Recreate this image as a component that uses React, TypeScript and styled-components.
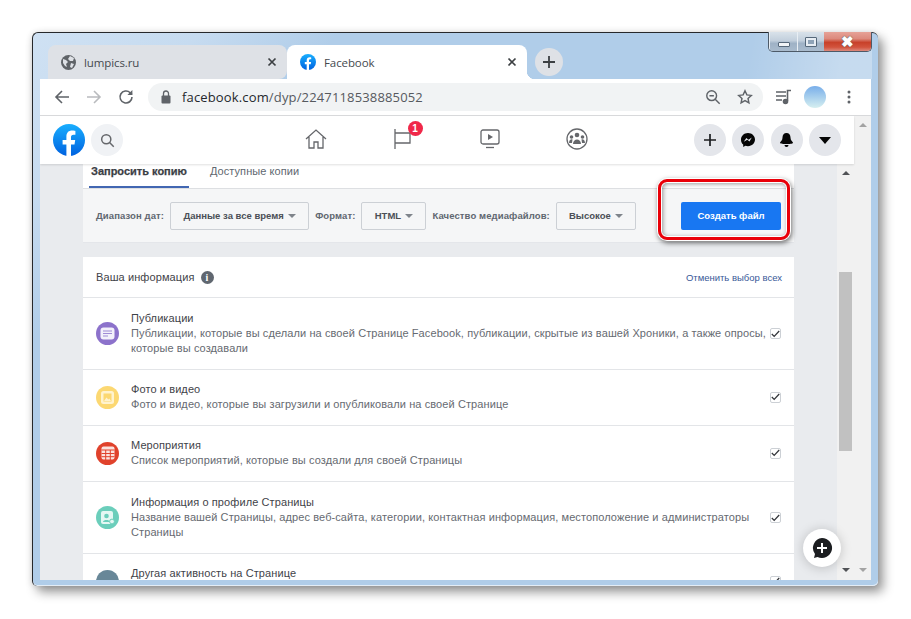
import React, { FC, ReactNode } from "react";
import styled, { createGlobalStyle } from "styled-components";

const GlobalStyle = createGlobalStyle`
  html, body {
    margin: 0;
    padding: 0;
    background: #ffffff;
  }
  * {
    box-sizing: border-box;
  }
`;

const Screen = styled.div`
  width: 911px;
  height: 619px;
  padding: 32px 0 0 32px;
  overflow: hidden;
  background: #ffffff;
`;

const Window = styled.div`
  width: 846px;
  height: 554px;
  display: flex;
  flex-direction: column;
  padding: 0 7px 6px 7px;
  border-top: 1px solid #26282b;
  border-left: 1px solid #26282b;
  border-radius: 6px 6px 5px 5px;
  background: linear-gradient(135deg, #cfe1f3 0, #c6dbf0 12%, #b0cde9 22%, #b0cde9 100%);
  box-shadow: inset 0 -1px 0 #e3ecf5, 5px 6px 11px rgba(0, 0, 0, 0.42), -1px 0 6px rgba(0, 0, 0, 0.1);
`;

const TabStrip = styled.div`
  height: 46px;
  display: flex;
  align-items: flex-end;
  margin: 0 -1px 0 -7px;
  padding-left: 15px;
  background: linear-gradient(100deg, transparent 85%, rgba(255, 255, 255, 0.28) 96%);
`;

const Tab = styled.div<{ $active?: boolean }>`
  position: relative;
  width: ${(p) => (p.$active ? 240 : 239)}px;
  height: 34px;
  display: flex;
  align-items: center;
  gap: 8px;
  padding: 0 10px 0 13px;
  border-radius: ${(p) => (p.$active ? "8px 8px 0 0" : "8px 8px 8px 0")};
  background: ${(p) => (p.$active ? "#ffffff" : "#dee1e6")};
  color: #45494e;
  font: 11.5px "Open Sans", "Noto Sans", sans-serif;
  letter-spacing: -0.1px;
`;

const TabTitle = styled.span`
  flex: 1;
`;

const Flare = styled.span`
  position: absolute;
  right: -8px;
  bottom: 0;
  width: 8px;
  height: 8px;
  background: radial-gradient(circle at 100% 0, transparent 8px, #ffffff 8.5px);
`;

const NewTab = styled.div`
  width: 28px;
  height: 28px;
  margin: 0 0 3px 8px;
  display: flex;
  align-items: center;
  justify-content: center;
  border-radius: 50%;
  background: #dee1e6;
`;

const WindowControls = styled.div`
  align-self: flex-start;
  margin: -1px 0 0 auto;
  height: 20px;
  display: flex;
  border: 1px solid #4d5a68;
  border-top: none;
  border-radius: 0 0 5px 5px;
  overflow: hidden;
`;

const ControlButton = styled.div<{ $width: number; $close?: boolean }>`
  width: ${(p) => p.$width}px;
  display: flex;
  align-items: center;
  justify-content: center;
  border-left: ${(p) => (p.$close ? "none" : "1px solid #e8eef4")};
  background: ${(p) =>
    p.$close
      ? "linear-gradient(#e6a297 0, #dc8a7d 35%, #c8412a 55%, #d2533d 80%, #dc8a7d 100%)"
      : "linear-gradient(#d9e2ea 0, #c2cfdc 45%, #9fb2c6 60%, #a9bbcd 100%)"};
`;

const MinGlyph = styled.span`
  width: 12px;
  height: 5px;
  margin-top: 5px;
  background: #f1f4f7;
  border: 1px solid #56687a;
  border-radius: 1px;
`;

const MaxGlyph = styled.span`
  width: 12px;
  height: 10px;
  border: 1px solid #56687a;
  border-radius: 1px;
  box-shadow: inset 0 0 0 2px #e7edf3;
  background: #8fa3b7;
`;

const CloseGlyph = styled.span`
  color: #ffffff;
  font: bold 15px "Liberation Sans", sans-serif;
  line-height: 15px;
  text-shadow: 0 0 1px #5a5a5a, 0 0 1px #5a5a5a;
`;

const Toolbar = styled.div`
  height: 37px;
  display: flex;
  align-items: center;
  padding: 0 6px;
  background: #ffffff;
  border-bottom: 1px solid #d8d9db;
`;

const Slot = styled.div<{ $width?: number }>`
  width: ${(p) => p.$width ?? 32}px;
  height: 28px;
  flex: none;
  display: flex;
  align-items: center;
  justify-content: center;
`;

const Omnibox = styled.div`
  flex: 1;
  height: 28px;
  margin: 0 5px 0 6px;
  display: flex;
  align-items: center;
  padding: 0 2px 0 10px;
  border-radius: 14px;
  background: #f1f3f4;
`;

const Url = styled.span`
  flex: 1;
  margin-left: 8px;
  color: #56595e;
  font: 13px "Open Sans", "Noto Sans", sans-serif;
  letter-spacing: 0.15px;
`;

const Host = styled.span`
  color: #25282c;
`;

const Avatar = styled.div`
  width: 22px;
  height: 22px;
  margin: 0 7px 0 4px;
  flex: none;
  border-radius: 50%;
  background: linear-gradient(#78aeea, #d6eff0);
`;

const Viewport = styled.div`
  position: relative;
  flex: 1;
  min-height: 0;
  display: flex;
  overflow: hidden;
`;

const Main = styled.div`
  width: 814px;
  display: flex;
  flex-direction: column;
`;

const FbBar = styled.div`
  position: relative;
  z-index: 2;
  height: 48px;
  flex: none;
  display: flex;
  align-items: center;
  padding: 0 13px;
  background: #ffffff;
  box-shadow: 0 1px 2px rgba(0, 0, 0, 0.12);
`;

const SearchCircle = styled.div`
  width: 32px;
  height: 32px;
  margin-left: 6px;
  display: flex;
  align-items: center;
  justify-content: center;
  border-radius: 50%;
  background: #f0f2f5;
`;

const NavGroup = styled.div`
  margin-left: 149.5px;
  display: flex;
`;

const NavItem = styled.div`
  position: relative;
  width: 87px;
  height: 32px;
  display: flex;
  align-items: center;
  justify-content: center;
  padding-bottom: 2px;
`;

const Badge = styled.span`
  position: absolute;
  top: -3px;
  left: 48px;
  width: 15px;
  height: 15px;
  border-radius: 50%;
  background: #f02849;
  color: #ffffff;
  font: bold 10px/15px "Liberation Sans", sans-serif;
  text-align: center;
`;

const ActionGroup = styled.div`
  margin-left: auto;
  display: flex;
  gap: 6.33px;
`;

const ActionCircle = styled.div`
  width: 32px;
  height: 32px;
  display: flex;
  align-items: center;
  justify-content: center;
  border-radius: 50%;
  background: #e4e6eb;
`;

const PageRow = styled.div`
  flex: 1;
  min-height: 0;
  display: flex;
`;

const Content = styled.div`
  flex: 1;
  min-width: 0;
  padding-left: 43px;
  overflow: hidden;
  background: #e9ebee;
  font-family: "Liberation Sans", Arial, sans-serif;
`;

const Card = styled.div`
  width: 711px;
  background: #ffffff;
`;

const TabBar = styled.div`
  height: 24px;
  display: flex;
  gap: 19px;
  padding-left: 6px;
`;

const PageTab = styled.div<{ $active?: boolean }>`
  height: 24px;
  padding: 0 2px;
  border-bottom: 2px solid ${(p) => (p.$active ? "#4267b2" : "transparent")};
  color: ${(p) => (p.$active ? "#3b3e44" : "#606770")};
  font-size: 11px;
  font-weight: ${(p) => (p.$active ? 600 : 400)};
  letter-spacing: ${(p) => (p.$active ? 0 : 0.07)}px;
  line-height: 15px;
  -webkit-text-stroke: ${(p) => (p.$active ? "0.25px #3b3e44" : "0")};
`;

const Filters = styled.div`
  height: 55px;
  display: flex;
  align-items: center;
  gap: 6px;
  padding: 0 13px;
  background: #f5f6f7;
  border-top: 1px solid #dddfe2;
  border-bottom: 1px solid #e4e6ea;
`;

const FilterLabel = styled.span`
  color: #606770;
  font-size: 9.5px;
  font-weight: bold;
  letter-spacing: 0.1px;
  white-space: nowrap;
`;

const Select = styled.div<{ $width: number }>`
  width: ${(p) => p.$width}px;
  height: 28px;
  flex: none;
  display: flex;
  align-items: center;
  justify-content: center;
  gap: 4px;
  border: 1px solid #ccd0d5;
  border-radius: 2px;
  color: #4b4f56;
  font-size: 9.5px;
  font-weight: bold;
`;

const Caret = styled.span`
  width: 0;
  height: 0;
  margin-top: 1px;
  border-left: 4px solid transparent;
  border-right: 4px solid transparent;
  border-top: 4px solid #7f848b;
`;

const CreateButton = styled.div`
  position: relative;
  width: 100px;
  height: 28px;
  margin-left: auto;
  display: flex;
  align-items: center;
  justify-content: center;
  border-radius: 2px;
  background: #1877f2;
  color: #ffffff;
  font-size: 9.5px;
  font-weight: bold;
`;

// red annotation frame drawn over the screenshot
const Highlight = styled.span`
  position: absolute;
  inset: -23px -9px -10px -23px;
  border: 3px solid #ea0009;
  border-radius: 9px;
  box-shadow: 0 0 0 1px #ffffff, inset 0 0 0 1px #ffffff, 1px 2px 5px 1px rgba(0, 0, 0, 0.55),
    inset 1px 1px 4px 1px rgba(0, 0, 0, 0.4);
`;

const InfoCard = styled(Card)`
  margin-top: 14px;
`;

const InfoHeader = styled.div`
  height: 40px;
  display: flex;
  align-items: center;
  gap: 6px;
  padding: 0 12px 0 13px;
  color: #3f4349;
  font-size: 11px;
  letter-spacing: 0.1px;
`;

const InfoDot = styled.span`
  width: 13px;
  height: 13px;
  border-radius: 50%;
  background: #606770;
  color: #ffffff;
  font: bold 10px/13px "Liberation Serif", serif;
  text-align: center;
`;

const DeselectLink = styled.span`
  margin-left: auto;
  color: #385898;
  font-size: 9.5px;
  letter-spacing: 0;
`;

const Row = styled.div<{ $tall?: boolean }>`
  min-height: 56px;
  display: flex;
  align-items: center;
  padding: ${(p) => (p.$tall ? "13px" : "12px 13px 13px")};
  border-top: 1px solid #e3e5e8;
`;

const RowIcon = styled.div<{ $color: string }>`
  width: 23px;
  height: 23px;
  flex: none;
  margin-right: 12px;
  display: flex;
  align-items: center;
  justify-content: center;
  border-radius: 50%;
  background: ${(p) => p.$color};
`;

const RowText = styled.div`
  flex: 1;
  align-self: flex-start;
  min-width: 0;
  font-size: 11px;
  letter-spacing: 0.095px;
  line-height: 15px;
`;

const RowTitle = styled.div`
  color: #3f4349;
`;

const RowDescription = styled.div`
  color: #666a71;
`;

const Check = styled.div`
  width: 11px;
  height: 11px;
  flex: none;
  margin-left: 3px;
  display: flex;
  align-items: center;
  justify-content: center;
  border: 1px solid #ccd0d5;
  border-radius: 2px;
  background: #ffffff;
`;

const Scrollbar = styled.div`
  width: 17px;
  flex: none;
  display: flex;
  flex-direction: column;
  align-items: center;
  padding: 7px 0 8px;
  background: #f1f1f1;
`;

const ArrowUp = styled.span<{ $dark?: boolean }>`
  width: 0;
  height: 0;
  flex: none;
  border-left: 4px solid transparent;
  border-right: 4px solid transparent;
  border-bottom: 4px solid ${(p) => (p.$dark ? "#505256" : "#a3a3a3")};
`;

const ArrowDown = styled.span<{ $dark?: boolean }>`
  width: 0;
  height: 0;
  flex: none;
  margin-top: auto;
  border-left: 4px solid transparent;
  border-right: 4px solid transparent;
  border-top: 4px solid ${(p) => (p.$dark ? "#505256" : "#a3a3a3")};
`;

const Thumb = styled.div`
  width: 13px;
  height: 179px;
  margin-top: 97px;
  flex: none;
  background: #c1c1c1;
`;

const Fab = styled.div`
  position: absolute;
  right: 30px;
  bottom: 13px;
  z-index: 3;
  width: 38px;
  height: 38px;
  display: flex;
  align-items: center;
  justify-content: center;
  border-radius: 50%;
  background: #ffffff;
  box-shadow: 0 1px 12px rgba(0, 0, 0, 0.2);
`;

const Globe: FC = () => (
  <svg width="15" height="15" viewBox="0 0 15 15">
    <circle cx="7.5" cy="7.5" r="7.5" fill="#5f6368" />
    <path d="M2 4l3 1 2 2-2 2 1 3-2-1-2-3zM9 1l4 2-1 3-3 0-2-2zM10 8l3 1-2 4-2-1z" fill="#dee1e6" />
  </svg>
);

const FbLogo: FC<{ size: number; id: string }> = ({ size, id }) => (
  <svg width={size} height={size} viewBox="0 0 32 32" style={{ flex: "none" }}>
    <defs>
      <linearGradient id={id} x1="0" y1="0" x2="0" y2="1">
        <stop offset="0" stopColor="#19aefe" />
        <stop offset="1" stopColor="#0062e0" />
      </linearGradient>
    </defs>
    <circle cx="16" cy="16" r="16" fill={`url(#${id})`} />
    <path
      d="M13.4 32V20.6H9.6V16h3.8v-3.4c0-3.9 2.3-6 5.8-6 1.7 0 3.2.3 3.2.3v3.8h-1.9c-1.9 0-2.5 1.2-2.5 2.4V16h4.2l-.7 4.6h-3.5V32z"
      fill="#ffffff"
    />
  </svg>
);

const CloseIcon: FC = () => (
  <svg width="10" height="10" viewBox="0 0 10 10">
    <path d="M1.5 1.5l7 7M8.5 1.5l-7 7" stroke="#3c4043" strokeWidth="1.7" />
  </svg>
);

const Stroke: FC<{ size?: number; color?: string; width?: number; children: ReactNode }> = ({
  size = 18,
  color = "#5f6368",
  width = 1.6,
  children,
}) => (
  <svg width={size} height={size} viewBox="0 0 18 18" fill="none" stroke={color} strokeWidth={width}>
    {children}
  </svg>
);

const CheckMark: FC = () => (
  <svg width="9" height="8" viewBox="0 0 9 8">
    <path d="M0.8 4l2.4 2.4L8.2 1" fill="none" stroke="#33363b" strokeWidth="1.3" />
  </svg>
);

const rows = [
  {
    color: "#8c72cb",
    title: "Публикации",
    tall: true,
    description:
      "Публикации, которые вы сделали на своей Странице Facebook, публикации, скрытые из вашей Хроники, а также опросы, которые вы создавали",
    icon: (
      <svg width="15" height="13" viewBox="0 0 15 13">
        <rect x="0.5" y="0.5" width="14" height="12" rx="3" fill="#f3f0fb" />
        <path d="M3 4h9M3 6.5h9M3 9h5" stroke="#a08bd6" strokeWidth="1.2" />
      </svg>
    ),
  },
  {
    color: "#fcd872",
    title: "Фото и видео",
    description: "Фото и видео, которые вы загрузили и опубликовали на своей Странице",
    icon: (
      <svg width="15" height="15" viewBox="0 0 15 15">
        <rect x="1" y="1" width="13" height="13" rx="2.5" fill="#fff3cf" />
        <rect x="3.5" y="3.5" width="8" height="8" fill="#fcd872" />
        <path d="M4 11l2.5-3.5 1.8 2 1-1L11 11z" fill="#fff3cf" />
      </svg>
    ),
  },
  {
    color: "#e0422c",
    title: "Мероприятия",
    description: "Список мероприятий, которые вы создали для своей Страницы",
    icon: (
      <svg width="14" height="14" viewBox="0 0 14 14">
        <rect x="0.5" y="0.5" width="13" height="13" rx="2" fill="#fbe3df" />
        <path d="M0.5 4h13M0.5 7.5h13M0.5 10.7h13M4.7 4v10M9.3 4v10" stroke="#e0422c" strokeWidth="1" />
      </svg>
    ),
  },
  {
    color: "#6bcebb",
    title: "Информация о профиле Страницы",
    tall: true,
    description:
      "Название вашей Страницы, адрес веб-сайта, категории, контактная информация, местоположение и администраторы Страницы",
    icon: (
      <svg width="15" height="15" viewBox="0 0 15 15">
        <rect x="1" y="1" width="12" height="13" rx="2" fill="#e4f7f3" />
        <circle cx="6.5" cy="6" r="2.3" fill="#6bcebb" />
        <path d="M3 12c.4-2.6 6.5-2.6 7 0z" fill="#6bcebb" />
        <circle cx="12" cy="11.5" r="2.4" fill="#e4f7f3" stroke="#6bcebb" />
      </svg>
    ),
  },
  {
    color: "#688798",
    title: "Другая активность на Странице",
    icon: null,
  },
];

export default function App() {
  return (
    <Screen>
      <GlobalStyle />
      <Window>
        <TabStrip>
          <Tab>
            <Globe />
            <TabTitle>lumpics.ru</TabTitle>
            <CloseIcon />
          </Tab>
          <Tab $active>
            <FbLogo size={16} id="fav" />
            <TabTitle>Facebook</TabTitle>
            <CloseIcon />
            <Flare />
          </Tab>
          <NewTab>
            <svg width="14" height="14" viewBox="0 0 14 14">
              <path d="M7 1v12M1 7h12" stroke="#3c4043" strokeWidth="1.8" />
            </svg>
          </NewTab>
          <WindowControls>
            <ControlButton $width={28}>
              <MinGlyph />
            </ControlButton>
            <ControlButton $width={27}>
              <MaxGlyph />
            </ControlButton>
            <ControlButton $width={47} $close>
              <CloseGlyph>✖</CloseGlyph>
            </ControlButton>
          </WindowControls>
        </TabStrip>

        <Toolbar>
          <Slot>
            <Stroke>
              <path d="M16 9H3M9 3L3 9l6 6" />
            </Stroke>
          </Slot>
          <Slot>
            <Stroke color="#b9bbbe">
              <path d="M2 9h13M9 3l6 6-6 6" />
            </Stroke>
          </Slot>
          <Slot>
            <Stroke>
              <path d="M15 9a6 6 0 1 1-1.8-4.3L15 6.5" />
              <path d="M15.4 2v5h-5" fill="#5f6368" stroke="none" />
            </Stroke>
          </Slot>
          <Omnibox>
            <svg width="16" height="16" viewBox="0 0 16 16" style={{ flex: "none" }}>
              <rect x="3.5" y="6.5" width="9" height="8" rx="1" fill="#5f6368" />
              <path d="M5.5 7V4.5a2.5 2.5 0 0 1 5 0V7" fill="none" stroke="#5f6368" strokeWidth="1.3" />
            </svg>
            <Url>
              <Host>facebook.com</Host>/dyp/2247118538885052
            </Url>
            <Slot>
              <Stroke size={16}>
                <circle cx="7.5" cy="7.5" r="5.5" />
                <path d="M11.5 11.5l5 5M5 7.5h5" />
              </Stroke>
            </Slot>
            <Slot>
              <Stroke size={16}>
                <path d="M9 2l2.1 4.6 5 .6-3.7 3.4 1 5L9 13.1l-4.4 2.5 1-5L1.9 7.2l5-.6z" />
              </Stroke>
            </Slot>
          </Omnibox>
          <Slot>
            <Stroke>
              <path d="M1 4h10M1 8h10M1 12h6" />
              <path d="M12.5 13V2.5H16" />
              <circle cx="10.5" cy="13.5" r="2" fill="#5f6368" />
            </Stroke>
          </Slot>
          <Avatar />
          <Slot>
            <svg width="4" height="14" viewBox="0 0 4 14">
              <circle cx="2" cy="2" r="1.5" fill="#5f6368" />
              <circle cx="2" cy="7" r="1.5" fill="#5f6368" />
              <circle cx="2" cy="12" r="1.5" fill="#5f6368" />
            </svg>
          </Slot>
        </Toolbar>

        <Viewport>
          <Main>
            <FbBar>
              <FbLogo size={32} id="logo" />
              <SearchCircle>
                <Stroke size={15} color="#65676b" width={1.8}>
                  <circle cx="7.5" cy="7.5" r="5.5" />
                  <path d="M11.5 11.5l5 5" />
                </Stroke>
              </SearchCircle>
              <NavGroup>
                <NavItem>
                  <svg width="22" height="20" viewBox="0 0 22 20" fill="none" stroke="#65676b" strokeWidth="1.3">
                    <path d="M1 10L11 1l10 9M4 8v11h5v-6h4v6h5V8" />
                  </svg>
                </NavItem>
                <NavItem>
                  <svg width="20" height="22" viewBox="0 0 20 22" fill="none" stroke="#65676b" strokeWidth="1.3">
                    <path d="M2 1v20M2 5h15v10H2" />
                  </svg>
                  <Badge>1</Badge>
                </NavItem>
                <NavItem>
                  <svg width="20" height="20" viewBox="0 0 20 20" fill="none" stroke="#65676b" strokeWidth="1.3">
                    <rect x="1" y="1" width="18" height="14" rx="2" />
                    <path d="M8 5l5 3-5 3z" fill="#65676b" stroke="none" />
                    <path d="M6 18.5h8" />
                  </svg>
                </NavItem>
                <NavItem>
                  <svg width="22" height="22" viewBox="0 0 22 22">
                    <circle cx="11" cy="11" r="10" fill="none" stroke="#65676b" strokeWidth="1.3" />
                    <circle cx="11" cy="7" r="2.3" fill="#65676b" />
                    <circle cx="5.5" cy="9" r="1.8" fill="#65676b" />
                    <circle cx="16.5" cy="9" r="1.8" fill="#65676b" />
                    <path d="M7 16c0-6 8-6 8 0zM3 15c0-4 3-4 3.5-3.5L6 15zM19 15c0-4-3-4-3.5-3.5L16 15z" fill="#65676b" />
                  </svg>
                </NavItem>
              </NavGroup>
              <ActionGroup>
                <ActionCircle>
                  <svg width="12" height="12" viewBox="0 0 12 12">
                    <path d="M6 0v12M0 6h12" stroke="#1c1e21" strokeWidth="1.7" />
                  </svg>
                </ActionCircle>
                <ActionCircle>
                  <svg width="16" height="16" viewBox="0 0 16 16">
                    <path d="M8 1C4 1 1 3.9 1 7.7c0 2 .8 3.7 2.2 4.9V15l2.2-1.2c.8.2 1.7.4 2.6.4 4 0 7-2.9 7-6.6S12 1 8 1z" fill="#050505" />
                    <path d="M3.8 9.8L6.3 6l2.2 1.7L11.8 5.6 9.5 9.4 7.3 7.7z" fill="#e4e6eb" />
                  </svg>
                </ActionCircle>
                <ActionCircle>
                  <svg width="15" height="16" viewBox="0 0 15 16">
                    <path d="M7.5 1C5 1 3.5 3 3.5 5.5c0 2.5-1.5 3.5-2.5 5 0 1 1.5 1.5 6.5 1.500s6.500-.5 6.500-1.500c-1-1.500-2.500-2.500-2.500-5C11.500 3 10 1 7.500 1z" fill="#050505" />
                    <path d="M5.500 13a2 2 0 0 0 4 0z" fill="#050505" />
                  </svg>
                </ActionCircle>
                <ActionCircle>
                  <svg width="12" height="7" viewBox="0 0 12 7">
                    <path d="M0 0h12L6 7z" fill="#050505" />
                  </svg>
                </ActionCircle>
              </ActionGroup>
            </FbBar>

            <PageRow>
              <Content>
                <Card>
                  <TabBar>
                    <PageTab $active>Запросить копию</PageTab>
                    <PageTab>Доступные копии</PageTab>
                  </TabBar>
                  <Filters>
                    <FilterLabel>Диапазон дат:</FilterLabel>
                    <Select $width={139}>
                      Данные за все время <Caret />
                    </Select>
                    <FilterLabel>Формат:</FilterLabel>
                    <Select $width={65}>
                      HTML <Caret />
                    </Select>
                    <FilterLabel>Качество медиафайлов:</FilterLabel>
                    <Select $width={80}>
                      Высокое <Caret />
                    </Select>
                    <CreateButton>
                      Создать файл
                      <Highlight />
                    </CreateButton>
                  </Filters>
                </Card>

                <InfoCard>
                  <InfoHeader>
                    Ваша информация
                    <InfoDot>i</InfoDot>
                    <DeselectLink>Отменить выбор всех</DeselectLink>
                  </InfoHeader>
                  {rows.map((row) => (
                    <Row key={row.title} $tall={row.tall}>
                      <RowIcon $color={row.color}>{row.icon}</RowIcon>
                      <RowText>
                        <RowTitle>{row.title}</RowTitle>
                        {row.description && <RowDescription>{row.description}</RowDescription>}
                      </RowText>
                      <Check>
                        <CheckMark />
                      </Check>
                    </Row>
                  ))}
                </InfoCard>
              </Content>
              <Scrollbar>
                <ArrowUp $dark />
                <Thumb />
                <ArrowDown $dark />
              </Scrollbar>
            </PageRow>
          </Main>
          <Scrollbar>
            <ArrowUp />
            <ArrowDown />
          </Scrollbar>
          <Fab>
            <svg width="22" height="22" viewBox="0 0 22 22">
              <path d="M11 1a10 10 0 1 1-4.5 18.9L3 21l1-4A10 10 0 0 1 11 1z" fill="#1c1e21" />
              <path d="M11 6v10M6 11h10" stroke="#ffffff" strokeWidth="2" />
            </svg>
          </Fab>
        </Viewport>
      </Window>
    </Screen>
  );
}
